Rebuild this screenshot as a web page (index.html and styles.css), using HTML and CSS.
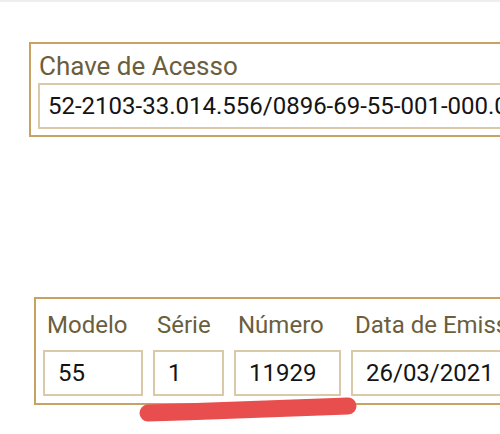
FILE: index.html
```
<!DOCTYPE html>
<html lang="pt">
<head>
    <meta charset="UTF-8">
    <meta name="viewport" content="width=device-width, initial-scale=1.0">
    <title>Nota Fiscal</title>
    <link rel="stylesheet" href="styles.css">
</head>
<body>
    <div class="top-bar"></div>

    <!-- Chave de acesso -->
    <div class="box box-chave">
        <div class="label">Chave de Acesso</div>
        <div class="field field-chave">52-2103-33.014.556/0896-69-55-001-000.011.929-100.000.040-7</div>
    </div>

    <!-- Dados da nota -->
    <div class="box box-dados">
        <div class="col col-modelo">
            <div class="label">Modelo</div>
            <div class="field">55</div>
        </div>
        <div class="col col-serie">
            <div class="label">Série</div>
            <div class="field">1</div>
        </div>
        <div class="col col-numero">
            <div class="label">Número</div>
            <div class="field">11929</div>
        </div>
        <div class="col col-data">
            <div class="label">Data de Emissão</div>
            <div class="field">26/03/2021</div>
        </div>

        <svg class="risco" width="230" height="30" viewBox="0 0 230 30">
            <path d="M12 18 C 80 16, 150 13, 212 11" stroke="#e84e4e" stroke-width="17" stroke-linecap="round" fill="none"/>
        </svg>
    </div>
</body>
</html>
```
FILE: styles.css
```
:root {
    --gold: #c8a263;
    --field-border: #d9c9a9;
    --label-color: #6b5e3d;
    --text-color: #141414;
}

body {
    margin: 0;
    padding: 0;
    background-color: #ffffff;
    font-family: Roboto, "Liberation Sans", sans-serif;
    overflow: hidden;
    width: 500px;
    height: 434px;
}

.top-bar {
    height: 2px;
    background-color: #eeeeee;
}

.box {
    border: 2px solid var(--gold);
    border-right: none;
    white-space: nowrap;
    overflow: hidden;
}

.label {
    font-size: 24px;
    line-height: 28px;
    color: var(--label-color);
}

.field {
    border: 2px solid var(--field-border);
    height: 42px;
    font-size: 24px;
    line-height: 42px;
    color: var(--text-color);
    overflow: hidden;
}

/* chave */
.box-chave {
    margin: 40px 0 0 29px;
    padding: 8px 0 6px 7px;
}

.box-chave .label {
    font-size: 26px;
    padding-left: 1px;
    margin-bottom: 3px;
}

.field-chave {
    padding-left: 8px;
    border-right: none;
}

/* dados */
.box-dados {
    position: relative;
    margin: 160px 0 0 34px;
    padding: 12px 0 7px 7px;
    display: flex;
    gap: 10px;
    overflow: visible;
}

.col {
    flex-shrink: 0;
}

.col .label {
    padding-left: 4px;
    margin-bottom: 11px;
}

.col .field {
    padding-left: 13px;
}

.col-modelo .field {
    width: 83px;
}

.col-serie .field {
    width: 54px;
}

.col-numero .field {
    width: 90px;
}

.col-data .field {
    width: 200px;
}

.risco {
    position: absolute;
    left: 100px;
    top: 96px;
}
```
